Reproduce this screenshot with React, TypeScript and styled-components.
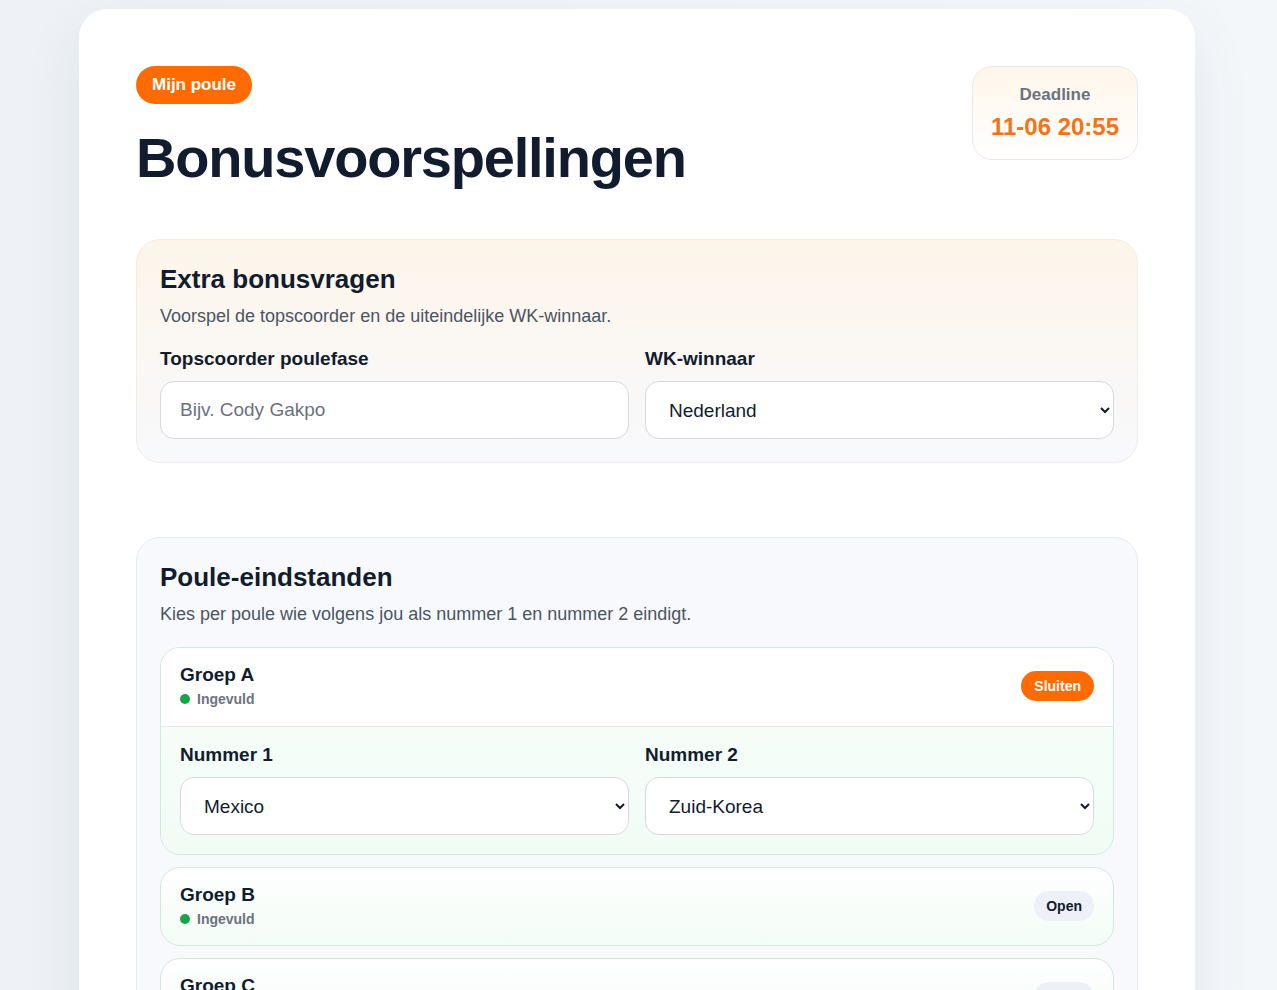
import React, { FC } from "react"
import styled, { createGlobalStyle } from "styled-components"

const GlobalStyle = createGlobalStyle`
  html, body {
    margin: 0;
    padding: 0;
    background: #f1f4f8;
    font-family: "Liberation Sans", Arial, sans-serif;
    color: #111c2e;
  }
  * {
    box-sizing: border-box;
  }
`

const Page = styled.div`
  padding: 9px 0 0 79px;
  min-height: 990px;
  background: linear-gradient(90deg, #eef2f6 0%, #f2f5f9 60%, #f4f7fa 100%);
`

const Card = styled.main`
  width: 1116px;
  background: #ffffff;
  border-radius: 28px 28px 0 0;
  padding: 57px 57px 40px 57px;
  box-shadow: 0 20px 60px rgba(30, 45, 80, 0.08);
`

const Header = styled.header`
  display: flex;
  justify-content: space-between;
  align-items: flex-start;
`

const Pill = styled.span<{ $tone: "orange" | "grey"; $size?: number }>`
  display: inline-flex;
  align-items: center;
  justify-content: center;
  border-radius: 999px;
  font-weight: 700;
  font-size: ${p => p.$size ?? 14}px;
  background: ${p => (p.$tone === "orange" ? "#ff6b00" : "#edf0f6")};
  color: ${p => (p.$tone === "orange" ? "#ffffff" : "#111c2e")};
`

const PouleBadge = styled(Pill)`
  height: 38px;
  padding: 0 16px;
`

const Title = styled.h1`
  margin: 22px 0 0 0;
  font-size: 56px;
  line-height: 64px;
  letter-spacing: -1.2px;
  font-weight: 700;
  color: #111c2e;
`

const DeadlineBox = styled.div`
  width: 166px;
  height: 94px;
  border: 1px solid #e8e9ef;
  border-radius: 20px;
  background: linear-gradient(180deg, #fff6ea 0%, #ffffff 100%);
  display: flex;
  flex-direction: column;
  align-items: center;
  justify-content: center;
  gap: 8px;
`

const DeadlineLabel = styled.div`
  font-size: 17px;
  font-weight: 700;
  color: #6b7280;
`

const DeadlineValue = styled.div`
  font-size: 24px;
  font-weight: 700;
  color: #f47314;
`

const Section = styled.section<{ $warm?: boolean; $top: number }>`
  margin-top: ${p => p.$top}px;
  border-radius: 24px;
  border: 1px solid ${p => (p.$warm ? "#f0ece6" : "#e6eaf1")};
  background: ${p =>
    p.$warm
      ? "linear-gradient(180deg, #fdf5ea 0%, #f8f9fc 100%)"
      : "#f7f9fd"};
  padding: 22px 23px 23px 23px;
`

const SectionTitle = styled.h2`
  margin: 0;
  font-size: 26px;
  line-height: 34px;
  font-weight: 700;
  color: #111c2e;
`

const SectionText = styled.p`
  margin: 8px 0 0 0;
  font-size: 18px;
  line-height: 24px;
  color: #4b5563;
`

const FieldGrid = styled.div<{ $top: number }>`
  display: grid;
  grid-template-columns: 1fr 1fr;
  gap: 16px;
  margin-top: ${p => p.$top}px;
`

const Field = styled.label`
  display: flex;
  flex-direction: column;
  gap: 11px;
`

const FieldLabel = styled.span`
  font-size: 19px;
  line-height: 22px;
  font-weight: 700;
  color: #111c2e;
`

const TextInput = styled.input`
  height: 58px;
  border: 1px solid #d5d9e2;
  border-radius: 14px;
  background: #ffffff;
  padding: 0 19px;
  font-family: "Liberation Sans", Arial, sans-serif;
  font-size: 19px;
  color: #111c2e;
  outline: none;

  &::placeholder {
    color: #6b7280;
  }
`

const Select = styled.select`
  height: 58px;
  width: 100%;
  border: 1px solid #d5d9e2;
  border-radius: 14px;
  background: #ffffff;
  padding: 0 8px 0 19px;
  font-family: "Liberation Sans", Arial, sans-serif;
  font-size: 19px;
  color: #111c2e;
  outline: none;
`

const GroupList = styled.div`
  display: flex;
  flex-direction: column;
  gap: 12px;
  margin-top: 21px;
`

const GroupCard = styled.div`
  border: 1px solid #cfe9da;
  border-radius: 20px;
  overflow: hidden;
  background: linear-gradient(180deg, #ffffff 0%, #f3fcf6 100%);
`

const GroupHead = styled.div<{ $open: boolean }>`
  display: flex;
  justify-content: space-between;
  align-items: center;
  padding: 15px 19px ${p => (p.$open ? 18 : 17)}px 19px;
  background: ${p => (p.$open ? "#ffffff" : "transparent")};
  border-bottom: ${p => (p.$open ? "1px solid #dfe8ea" : "none")};
`

const GroupName = styled.div`
  font-size: 19px;
  line-height: 24px;
  font-weight: 700;
  color: #111c2e;
`

const Status = styled.div`
  display: flex;
  align-items: center;
  gap: 7px;
  margin-top: 3px;
  font-size: 14px;
  line-height: 18px;
  font-weight: 700;
  color: #6b7280;
`

const Dot = styled.span`
  width: 10px;
  height: 10px;
  border-radius: 50%;
  background: #16a34a;
`

const ToggleButton = styled(Pill)<{ $wide: boolean }>`
  height: 30px;
  padding: 0 ${p => (p.$wide ? 13 : 12)}px;
`

const GroupBody = styled.div`
  padding: 17px 19px 19px 19px;
  background: linear-gradient(180deg, #f6fdf9 0%, #f1fcf5 100%);
`

type Group = {
  name: string
  open: boolean
  first?: string
  second?: string
}

const groups: Group[] = [
  { name: "Groep A", open: true, first: "Mexico", second: "Zuid-Korea" },
  { name: "Groep B", open: false },
  { name: "Groep C", open: false },
  { name: "Groep D", open: false },
]

const countries = ["Nederland", "Mexico", "Zuid-Korea", "Duitsland", "Brazilië", "Argentinië"]

const CountrySelect: FC<{ value?: string }> = ({ value }) => (
  <Select defaultValue={value}>
    {countries.map(c => (
      <option key={c}>{c}</option>
    ))}
  </Select>
)

const GroupItem: FC<{ group: Group }> = ({ group }) => (
  <GroupCard>
    <GroupHead $open={group.open}>
      <div>
        <GroupName>{group.name}</GroupName>
        <Status>
          <Dot />
          Ingevuld
        </Status>
      </div>
      <ToggleButton $tone={group.open ? "orange" : "grey"} $wide={group.open}>
        {group.open ? "Sluiten" : "Open"}
      </ToggleButton>
    </GroupHead>
    {group.open && (
      <GroupBody>
        <FieldGrid $top={0}>
          <Field>
            <FieldLabel>Nummer 1</FieldLabel>
            <CountrySelect value={group.first} />
          </Field>
          <Field>
            <FieldLabel>Nummer 2</FieldLabel>
            <CountrySelect value={group.second} />
          </Field>
        </FieldGrid>
      </GroupBody>
    )}
  </GroupCard>
)

export default function App() {
  return (
    <Page>
      <GlobalStyle />
      <Card>
        <Header>
          <div>
            <PouleBadge $tone="orange" $size={17}>
              Mijn poule
            </PouleBadge>
            <Title>Bonusvoorspellingen</Title>
          </div>
          <DeadlineBox>
            <DeadlineLabel>Deadline</DeadlineLabel>
            <DeadlineValue>11-06 20:55</DeadlineValue>
          </DeadlineBox>
        </Header>

        <Section $warm $top={49}>
          <SectionTitle>Extra bonusvragen</SectionTitle>
          <SectionText>Voorspel de topscoorder en de uiteindelijke WK-winnaar.</SectionText>
          <FieldGrid $top={20}>
            <Field>
              <FieldLabel>Topscoorder poulefase</FieldLabel>
              <TextInput placeholder="Bijv. Cody Gakpo" />
            </Field>
            <Field>
              <FieldLabel>WK-winnaar</FieldLabel>
              <CountrySelect value="Nederland" />
            </Field>
          </FieldGrid>
        </Section>

        <Section $top={74}>
          <SectionTitle>Poule-eindstanden</SectionTitle>
          <SectionText>Kies per poule wie volgens jou als nummer 1 en nummer 2 eindigt.</SectionText>
          <GroupList>
            {groups.map(g => (
              <GroupItem key={g.name} group={g} />
            ))}
          </GroupList>
        </Section>
      </Card>
    </Page>
  )
}
